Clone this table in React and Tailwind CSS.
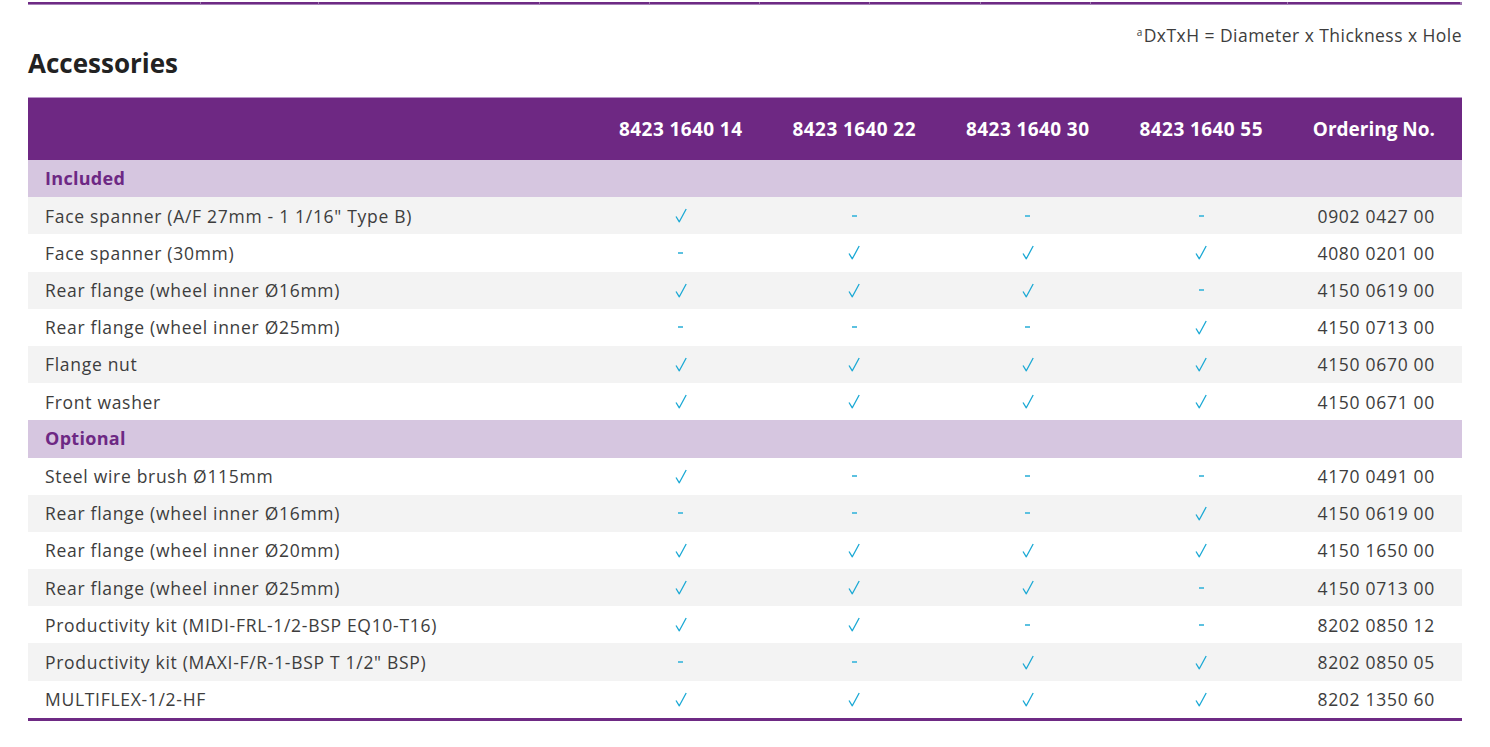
const included = [
  ['Face spanner (A/F 27mm - 1 1/16" Type B)', [1, 0, 0, 0], '0902 0427 00'],
  ['Face spanner (30mm)', [0, 1, 1, 1], '4080 0201 00'],
  ['Rear flange (wheel inner Ø16mm)', [1, 1, 1, 0], '4150 0619 00'],
  ['Rear flange (wheel inner Ø25mm)', [0, 0, 0, 1], '4150 0713 00'],
  ['Flange nut', [1, 1, 1, 1], '4150 0670 00'],
  ['Front washer', [1, 1, 1, 1], '4150 0671 00'],
]

const optional = [
  ['Steel wire brush Ø115mm', [1, 0, 0, 0], '4170 0491 00'],
  ['Rear flange (wheel inner Ø16mm)', [0, 0, 0, 1], '4150 0619 00'],
  ['Rear flange (wheel inner Ø20mm)', [1, 1, 1, 1], '4150 1650 00'],
  ['Rear flange (wheel inner Ø25mm)', [1, 1, 1, 0], '4150 0713 00'],
  ['Productivity kit (MIDI-FRL-1/2-BSP EQ10-T16)', [1, 1, 0, 0], '8202 0850 12'],
  ['Productivity kit (MAXI-F/R-1-BSP T 1/2" BSP)', [0, 0, 1, 1], '8202 0850 05'],
  ['MULTIFLEX-1/2-HF', [1, 1, 1, 1], '8202 1350 60'],
]

const models = ['8423 1640 14', '8423 1640 22', '8423 1640 30', '8423 1640 55']

// widths of the previous table's columns, peeking out as the top rule
const topSegments = [173, 118, 221, 110, 110, 110, 111, 110, 197, 173]

function Check() {
  return (
    <svg width="12" height="15" viewBox="0 0 12 15" fill="none">
      <path d="M1 8.5 L4.3 13.8 L11.2 1" stroke="#1ba9d5" strokeWidth="1.3" strokeLinejoin="round" />
    </svg>
  )
}

function Dash() {
  return <span className="block w-[5px] h-[2px] bg-[#5cc1e0]" />
}

function Row({ item, shaded }) {
  const [name, marks, order] = item
  return (
    <div className={`flex items-center h-[37.2px] text-[17.5px] tracking-[0.7px] text-[#3d3d3d] ${shaded ? 'bg-[#f3f3f3]' : 'bg-white'}`}>
      <div className="w-[566px] pl-[17px] whitespace-nowrap">{name}</div>
      {marks.map((m, i) => (
        <div key={i} className="w-[173.5px] flex justify-center items-center">
          {m ? <Check /> : <Dash />}
        </div>
      ))}
      <div className="flex-1 text-right pr-[27px] whitespace-nowrap">{order}</div>
    </div>
  )
}

function Section({ title }) {
  return (
    <div className="flex items-center h-[37.2px] bg-[#d6c6e0] pl-[17px] text-[18px] tracking-[0.3px] font-bold text-[#6d2884]">
      {title}
    </div>
  )
}

export default function App() {
  return (
    <div className="w-[1490px] h-[747px] bg-white px-[28px] pt-[2px] font-['Open_Sans',sans-serif] overflow-hidden">
      <div className="flex gap-[1px] bg-[#a07ab0]">
        {topSegments.map((w, i) => (
          <div key={i} style={{ width: w - 1 }} className="h-[3px] bg-[#6e2a84] border-b border-[#a783b7]" />
        ))}
      </div>

      <div className="flex justify-between items-start">
        <h2 className="mt-[45px] text-[26px] font-bold text-[#222] leading-none">Accessories</h2>
        <p className="mt-[17px] text-[17.5px] tracking-[0.45px] text-[#3d3d3d] leading-[26px] whitespace-nowrap">
          <span className="text-[10px] leading-none relative top-[-6px] mr-[1px]">a</span>DxTxH = Diameter x Thickness x Hole
        </p>
      </div>

      <div className="mt-[21px] border-t border-[#b995c9]">
        <div className="flex items-center h-[62px] bg-[#6e2883] text-white text-[19px] tracking-[0.4px] font-bold">
          <div className="w-[566px]" />
          {models.map(m => (
            <div key={m} className="w-[173.5px] text-center whitespace-nowrap">{m}</div>
          ))}
          <div className="flex-1 text-right pr-[27px] tracking-[0px] whitespace-nowrap">Ordering No.</div>
        </div>

        <Section title="Included" />
        {included.map((item, i) => (
          <Row key={'i' + i} item={item} shaded={i % 2 === 0} />
        ))}
        <Section title="Optional" />
        {optional.map((item, i) => (
          <Row key={'o' + i} item={item} shaded={i % 2 === 1} />
        ))}
        <div className="h-[3px] bg-[#6e2a84]" />
      </div>
    </div>
  )
}
